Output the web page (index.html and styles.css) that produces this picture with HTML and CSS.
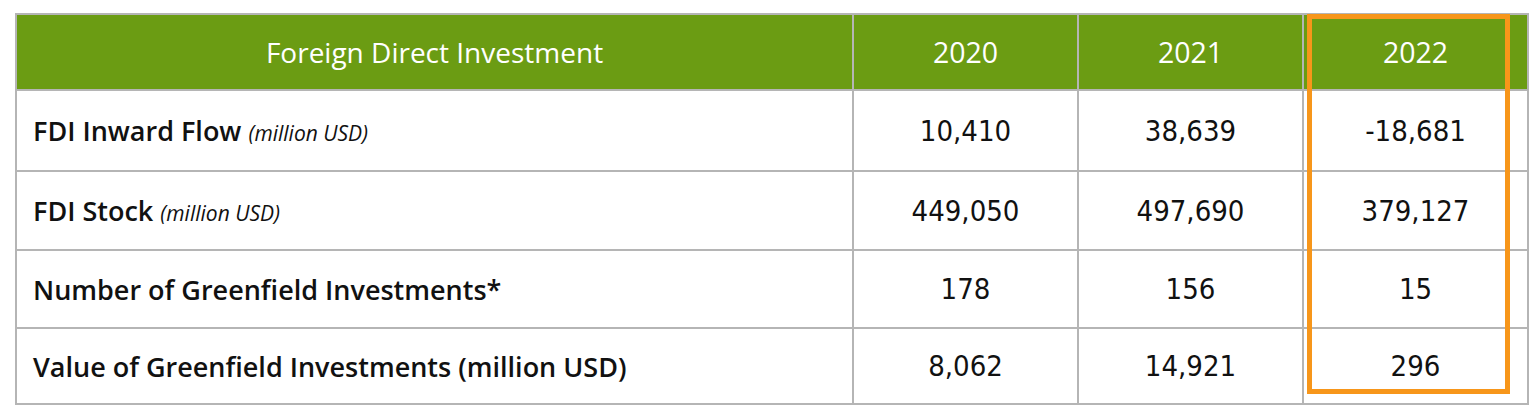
FILE: index.html
```html
<!DOCTYPE html>
<html>
<head>
<meta charset="utf-8">
<link rel="stylesheet" href="styles.css">
</head>
<body>
<div class="wrap">
  <table class="fdi">
    <colgroup>
      <col class="c-label">
      <col class="c-year">
      <col class="c-year">
      <col class="c-year last">
    </colgroup>
    <thead>
      <tr>
        <th class="head-title">Foreign Direct Investment</th>
        <th>2020</th>
        <th>2021</th>
        <th>2022</th>
      </tr>
    </thead>
    <tbody>
      <tr class="r1">
        <td class="label">FDI Inward Flow <span class="unit">(million USD)</span></td>
        <td>10,410</td>
        <td>38,639</td>
        <td>-18,681</td>
      </tr>
      <tr class="r2">
        <td class="label">FDI Stock <span class="unit">(million USD)</span></td>
        <td>449,050</td>
        <td>497,690</td>
        <td>379,127</td>
      </tr>
      <tr class="r3">
        <td class="label">Number of Greenfield Investments*</td>
        <td>178</td>
        <td>156</td>
        <td>15</td>
      </tr>
      <tr class="r4">
        <td class="label">Value of Greenfield Investments (million USD)</td>
        <td>8,062</td>
        <td>14,921</td>
        <td>296</td>
      </tr>
    </tbody>
  </table>
  <div class="highlight"></div>
</div>
</body>
</html>
```
FILE: styles.css
```css
html, body {
  margin: 0;
  padding: 0;
  background: #ffffff;
}
body {
  padding: 13px 0 0 15px;
}
.wrap {
  position: relative;
  width: 1510px;
}
.fdi {
  border-collapse: separate;
  border-spacing: 0;
  width: 1510px;
  table-layout: fixed;
  border-top: 2px solid #b5b5b5;
  border-left: 2px solid #b5b5b5;
}
.c-label { width: 837px; }
.c-year { width: 225px; }
.fdi th, .fdi td {
  border-right: 2px solid #b5b5b5;
  border-bottom: 2px solid #b5b5b5;
  padding: 0;
  text-align: center;
  vertical-align: middle;
}
.fdi th {
  background: #6b9c13;
  color: #ffffff;
  font-family: "Open Sans", sans-serif;
  font-weight: 500;
  font-size: 28.5px;
  height: 74px;
}
.fdi th.head-title {
  font-size: 28px;
}
.fdi td {
  color: #111111;
  font-family: "DejaVu Sans Condensed", "DejaVu Sans", sans-serif;
  font-size: 29px;
}
.fdi tr.r1 td { height: 79px; }
.fdi tr.r2 td { height: 77px; }
.fdi tr.r3 td { height: 76px; }
.fdi tr.r4 td { height: 74px; }
.fdi td.label {
  text-align: left;
  padding-left: 16px;
  font-family: "Open Sans", sans-serif;
  font-weight: 600;
  font-size: 27px;
}
.unit {
  font-style: italic;
  font-weight: 400;
  font-size: 21px;
}
.highlight {
  position: absolute;
  left: 1292px;
  top: 1px;
  width: 203px;
  height: 380px;
  box-sizing: border-box;
  border: 5px solid #f7961a;
}
```
